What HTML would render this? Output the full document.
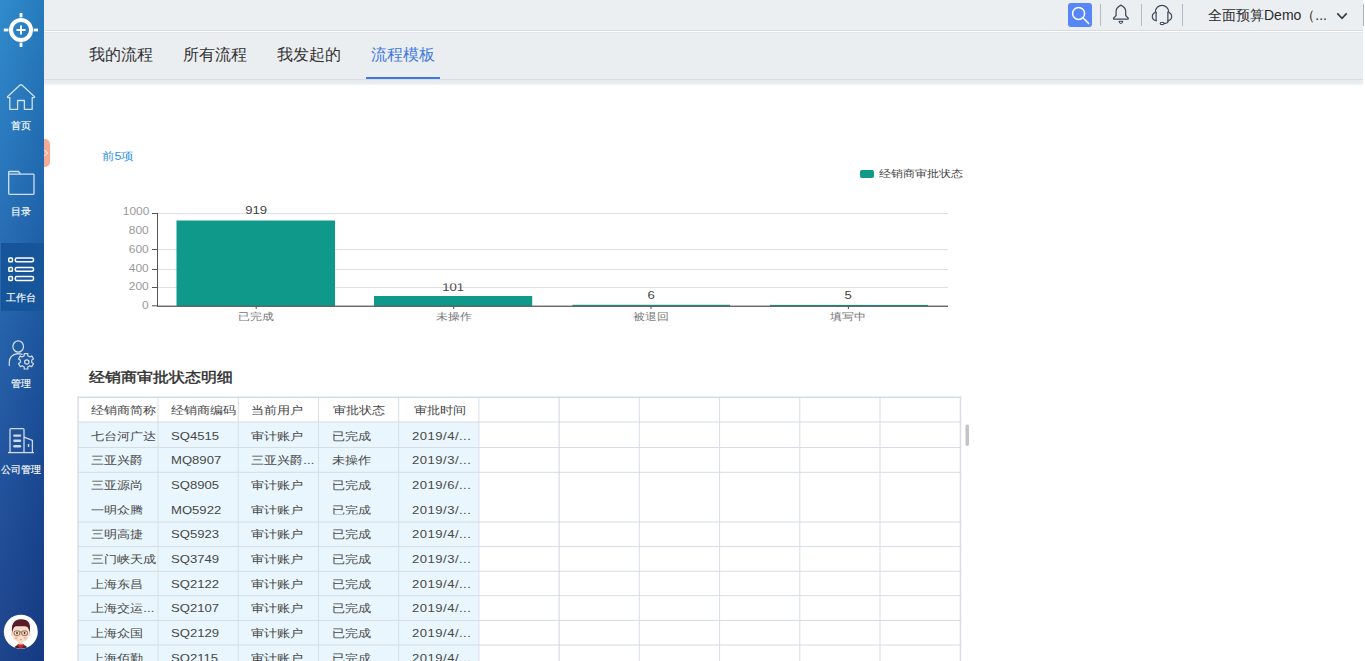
<!DOCTYPE html>
<html><head><meta charset="utf-8">
<style>
*{margin:0;padding:0;box-sizing:border-box}
html,body{width:1365px;height:661px;overflow:hidden;background:#fff;font-family:"Liberation Sans",sans-serif;color:#333}
.a{position:absolute;white-space:nowrap}
#side{position:absolute;left:0;top:0;width:44px;height:661px;background:linear-gradient(to right,rgba(255,255,255,.03),rgba(0,10,60,.1)),linear-gradient(180deg,#2a88cb 0%,#2473bb 25%,#1f5ea8 50%,#1b4c98 75%,#173f88 100%)}
.st{position:absolute;left:-1px;width:44px;text-align:center;font-size:10px;line-height:14px;color:#fff;-webkit-text-stroke:0.15px #fff}
#hdr{position:absolute;left:44px;top:0;width:1319px;height:31px;background:#eceff2;border-bottom:1px solid #d7dbe0}
#tabs{position:absolute;left:44px;top:32px;width:1319px;height:48px;background:#ebeef1;border-top:1px solid #e3e6e9;border-bottom:1px solid #d9dde3}
#shadow{position:absolute;left:44px;top:80px;width:1319px;height:6px;background:linear-gradient(#e8ebee 0%,#e9ecef 55%,rgba(255,255,255,0) 100%)}
.tab{position:absolute;top:45px;font-size:16px;line-height:20px;color:#333}
.sx{transform-origin:0 0}
.rl{position:absolute;background:#d6dce4}
.td{position:absolute;font-size:11px;line-height:14px;color:#474747;transform:scaleX(1.19);transform-origin:0 0;white-space:nowrap}
</style></head><body>
<div id="side">
  <!-- logo -->
  <svg class="a" style="left:0;top:0" width="44" height="60" viewBox="0 0 44 60">
    <circle cx="21" cy="30" r="10" fill="none" stroke="#fff" stroke-width="4"/>
    <rect x="19.6" y="13" width="2.8" height="4.3" fill="#fff"/>
    <rect x="19.6" y="42.6" width="2.8" height="4.4" fill="#fff"/>
    <rect x="3.8" y="28.6" width="4.6" height="2.8" fill="#fff"/>
    <rect x="33.6" y="28.6" width="4.4" height="2.8" fill="#fff"/>
    <path d="M16.5 30H25.5M21 25.5V34.5" stroke="#fff" stroke-width="1.9"/>
  </svg>
  <!-- home -->
  <svg class="a" style="left:0;top:75px" width="44" height="40" viewBox="0 75 44 40">
    <path d="M9.8 109.3V97.6H7.9Q7.1 97.3 7.7 96.5L20.1 85.1Q21 84.3 21.9 85.1L34.3 96.5Q34.9 97.3 34.1 97.6H32.2V109.3H24.4V100.5H17.6V109.3Z" fill="none" stroke="rgba(255,255,255,.78)" stroke-width="1.3" stroke-linejoin="round"/>
  </svg>
  <div class="st" style="top:119px">首页</div>
  <!-- folder -->
  <svg class="a" style="left:0;top:160px" width="44" height="40" viewBox="0 160 44 40">
    <path d="M8.7 193.6V172.3Q8.7 171.5 9.5 171.5H18.5L20.6 174.2H33.3Q34 174.2 34 175V193.6Q34 194.3 33.3 194.3H9.4Q8.7 194.3 8.7 193.6ZM8.7 174.2H20.6" fill="none" stroke="rgba(255,255,255,.78)" stroke-width="1.3" stroke-linejoin="round"/>
  </svg>
  <div class="st" style="top:205px">目录</div>
  <!-- active -->
  <div class="a" style="left:1px;top:243px;width:43px;height:68px;background:#17559a"></div>
  <svg class="a" style="left:0;top:250px" width="44" height="40" viewBox="0 250 44 40">
    <g fill="none" stroke="#fff" stroke-width="1.5">
      <rect x="8.8" y="257.9" width="3.6" height="3.8" rx="0.8"/>
      <rect x="15.3" y="257.9" width="18.2" height="3.8" rx="1.5"/>
      <rect x="8.8" y="267.4" width="3.6" height="3.8" rx="0.8"/>
      <rect x="15.3" y="267.4" width="18.2" height="3.8" rx="1.5"/>
      <rect x="8.8" y="276.6" width="3.6" height="3.8" rx="0.8"/>
      <rect x="15.3" y="276.6" width="18.2" height="3.8" rx="1.5"/>
    </g>
  </svg>
  <div class="st" style="top:291px">工作台</div>
  <!-- manage -->
  <svg class="a" style="left:0;top:335px" width="44" height="40" viewBox="0 335 44 40">
    <g fill="none" stroke="rgba(255,255,255,.8)" stroke-width="1.2">
      <ellipse cx="18.2" cy="346.5" rx="5.3" ry="5.7"/>
      <path d="M9.3 366V362Q9.5 355 17.5 353.6Q20.5 353.6 22.6 354.5"/>
      <path d="M24.2 353.6 L27.8 353.6 L27.8 355.7 L29.9 356.9 L31.7 355.9 L33.5 359 L31.7 360 L31.7 362.6 L33.5 363.6 L31.7 366.7 L29.9 365.7 L27.8 366.9 L27.8 369 L24.2 369 L24.2 366.9 L22.1 365.7 L20.3 366.7 L18.5 363.6 L20.3 362.6 L20.3 360 L18.5 359 L20.3 355.9 L22.1 356.9 L24.2 355.7Z" stroke-linejoin="round"/>
      <circle cx="26.8" cy="362" r="2.2"/>
    </g>
  </svg>
  <div class="st" style="top:377px">管理</div>
  <!-- company -->
  <svg class="a" style="left:0;top:420px" width="44" height="40" viewBox="0 420 44 40">
    <g fill="none" stroke="rgba(255,255,255,.78)" stroke-width="1.3" stroke-linejoin="round">
      <path d="M10 452.3V429.6Q10 428.6 11 428.6H23Q24 428.6 24 429.6V452.3"/>
      <path d="M24 437.2L32.4 440.4V452.3"/>
      <path d="M8 452.6H34"/>
    </g>
    <g fill="rgba(255,255,255,.78)">
      <rect x="13.2" y="434.4" width="8" height="2.4" rx="1.2"/>
      <rect x="13.2" y="439.5" width="8" height="2.4" rx="1.2"/>
      <rect x="13.2" y="445" width="8" height="2.4" rx="1.2"/>
      <rect x="27.8" y="444" width="1.5" height="3" rx=".6"/>
    </g>
  </svg>
  <div class="st" style="top:463px;left:-2px;width:46px">公司管理</div>
  <!-- avatar -->
  <svg class="a" style="left:0;top:610px" width="44" height="44" viewBox="0 610 44 44">
    <circle cx="20.8" cy="631.7" r="17" fill="#fff"/>
    <clipPath id="av"><circle cx="20.8" cy="631.7" r="16.9"/></clipPath>
    <g clip-path="url(#av)">
      <path d="M12.5 652Q13 645.5 20.8 644Q28.5 645.5 29.2 652Z" fill="#4e2434"/>
      <path d="M17.3 644.6L20.8 649.5L24.3 644.6L22.5 643.8L20.8 645.5L19 643.8Z" fill="#d4222c"/>
      <rect x="18.8" y="640" width="4" height="4.5" fill="#f3d2b8"/>
      <ellipse cx="12.3" cy="634" rx="1.3" ry="2" fill="#f3d2b8"/>
      <ellipse cx="29.3" cy="634" rx="1.3" ry="2" fill="#f3d2b8"/>
      <path d="M12.8 630Q12.8 626 20.8 625.5Q28.8 626 28.8 630V636Q28.5 640.5 20.8 643Q13.1 640.5 12.8 636Z" fill="#f9dec6"/>
      <path d="M12 633Q11 624 15 621Q18 618.8 21 619.3Q26 619 28.5 622Q30.8 625 29.7 633L28.6 629Q28 626.5 25 626.3Q20.5 626 16 626.3Q13.6 626.8 13.2 629Z" fill="#5a1c29"/>
      <g fill="none" stroke="#7a5a48" stroke-width=".9"><rect x="14.2" y="631" width="5.6" height="4.3" rx="1.3"/><rect x="21.8" y="631" width="5.6" height="4.3" rx="1.3"/><path d="M19.8 632H21.8"/></g>
      <circle cx="17" cy="633" r=".9" fill="#3a2626"/><circle cx="24.6" cy="633" r=".9" fill="#3a2626"/>
      <circle cx="16.3" cy="638" r="1.4" fill="#f7b4b0"/><circle cx="25.3" cy="638" r="1.4" fill="#f7b4b0"/>
      <path d="M19.8 639.6H21.8" stroke="#c4806c" stroke-width=".7"/>
    </g>
  </svg>
</div>
<!-- orange collapse tab -->
<div class="a" style="left:44px;top:138.5px;width:6px;height:28.5px;background:#f4ab93;border-radius:0 5px 5px 0"></div>
<svg class="a" style="left:44px;top:148px" width="6" height="10" viewBox="0 0 6 10"><path d="M0.5 2L3.5 5L0.5 8" fill="none" stroke="#fff" stroke-width="1"/></svg>

<!-- header -->
<div id="hdr"></div>
<div id="tabs"></div>
<div id="shadow"></div>
<div class="tab" style="left:89px">我的流程</div>
<div class="tab" style="left:183px">所有流程</div>
<div class="tab" style="left:277px">我发起的</div>
<div class="tab" style="left:371px;color:#4279e0">流程模板</div>
<div class="a" style="left:366px;top:77px;width:74px;height:2px;background:#3f78e0"></div>

<!-- header right -->
<div class="a" style="left:1068px;top:3px;width:24px;height:24px;background:#5686f7;border-radius:3px"></div>
<svg class="a" style="left:1068px;top:3px" width="24" height="24" viewBox="0 0 24 24">
  <circle cx="10.6" cy="10.4" r="6" fill="none" stroke="#fff" stroke-width="1.5"/>
  <path d="M15.2 15L20.6 20.4" stroke="#fff" stroke-width="1.5" stroke-linecap="round"/>
</svg>
<div class="a" style="left:1100px;top:4px;width:1px;height:22px;background:#b4bac2"></div>
<div class="a" style="left:1141px;top:4px;width:1px;height:22px;background:#b4bac2"></div>
<div class="a" style="left:1182px;top:4px;width:1px;height:22px;background:#b4bac2"></div>
<svg class="a" style="left:1110px;top:0" width="24" height="28" viewBox="0 0 24 28">
  <path d="M10.9 5.1C8.4 6.4 6.1 8.2 6.1 11.2V15.5L3.6 18.1Q3.2 19.1 4.3 19.1H17.5Q18.6 19.1 18.2 18.1L15.7 15.5V11.2C15.7 8.2 13.4 6.4 10.9 5.1Z" fill="none" stroke="#3f4b5a" stroke-width="1.25" stroke-linejoin="round"/>
  <path d="M9.1 21.2H12.7Q12.5 23.5 10.9 23.5Q9.3 23.5 9.1 21.2Z" fill="none" stroke="#3f4b5a" stroke-width="1.1" stroke-linejoin="round"/>
</svg>
<svg class="a" style="left:1150px;top:0" width="24" height="28" viewBox="0 0 24 28">
  <path d="M5.2 12.6C5.2 3.1 18.8 3.1 18.8 12.6" fill="none" stroke="#3f4b5a" stroke-width="1.25"/>
  <path d="M6.4 12.2Q2.3 13.2 2.3 16.5Q2.3 19.9 6.4 20.8Z" fill="none" stroke="#3f4b5a" stroke-width="1.2" stroke-linejoin="round"/>
  <path d="M17.6 12.2Q21.7 13.2 21.7 16.5Q21.7 19.9 17.6 20.8Z" fill="none" stroke="#3f4b5a" stroke-width="1.2" stroke-linejoin="round"/>
  <rect x="5.4" y="12.4" width="1.5" height="8.2" fill="#6f7c8a"/><rect x="17.1" y="12.4" width="1.5" height="8.2" fill="#6f7c8a"/>
  <path d="M18.3 20.6Q18.2 23.3 15.4 23.4H13.6" fill="none" stroke="#3f4b5a" stroke-width="1.2"/>
  <ellipse cx="12.1" cy="23.4" rx="2" ry="1.2" fill="none" stroke="#3f4b5a" stroke-width="1.1"/>
</svg>
<div class="a" style="left:1208px;top:5px;font-size:14px;line-height:20px;color:#2b2b2b">全面预算Demo（...</div>
<svg class="a" style="left:1335px;top:10px" width="14" height="12" viewBox="0 0 14 12"><path d="M2.3 3.4L7 8.4L11.7 3.4" fill="none" stroke="#2f3b4a" stroke-width="1.6"/></svg>
<div class="a" style="left:1363px;top:4px;width:1px;height:22px;background:#aab0b8"></div>

<!-- REPORT -->
<!--REPORT-->
<div class="a" style="left:101.5px;top:149px;font-size:11px;line-height:14px;color:#2f95e6;transform:scaleX(1.13);transform-origin:0 0">前5项</div>
<div class="a" style="left:859.5px;top:170px;width:14.5px;height:8px;background:#0e998b;border-radius:2px"></div>
<div class="a" style="left:879px;top:167px;font-size:10px;line-height:14px;color:#444;transform:scaleX(1.2);transform-origin:0 0">经销商审批状态</div>
<svg class="a" style="left:0;top:0" width="1365" height="661" viewBox="0 0 1365 661">
<rect x="158" y="213.0" width="790" height="1" fill="#e0e0e0"/>
<rect x="158" y="249.0" width="790" height="1" fill="#e0e0e0"/>
<rect x="158" y="269.0" width="790" height="1" fill="#e0e0e0"/>
<rect x="158" y="287.0" width="790" height="1" fill="#e0e0e0"/>
<rect x="176.5" y="220.5" width="158.5" height="85.69999999999999" fill="#0e998b"/>
<rect x="374" y="296" width="158.20000000000005" height="10.199999999999989" fill="#0e998b"/>
<rect x="572.5" y="304.8" width="157.5" height="1.3999999999999773" fill="#0e998b"/>
<rect x="770" y="304.9" width="158" height="1.3000000000000114" fill="#0e998b"/>
<rect x="157" y="213" width="1" height="93" fill="#555"/>
<rect x="157" y="305.6" width="791" height="1.3" fill="#5a5a5a"/>
<rect x="152" y="213.0" width="5" height="1" fill="#555"/>
<rect x="152" y="249.0" width="5" height="1" fill="#555"/>
<rect x="152" y="269.0" width="5" height="1" fill="#555"/>
<rect x="152" y="287.0" width="5" height="1" fill="#555"/>
<rect x="152" y="305.3" width="5" height="1" fill="#555"/>
<rect x="255.7" y="306" width="1" height="3" fill="#555"/>
<rect x="453.1" y="306" width="1" height="3" fill="#555"/>
<rect x="650.5" y="306" width="1" height="3" fill="#555"/>
<rect x="847.9" y="306" width="1" height="3" fill="#555"/>
</svg>
<div class="a" style="left:60px;width:89px;text-align:right;top:204.7px;font-size:10px;line-height:14px;color:#999"><span style="display:inline-block;transform:scaleX(1.19);transform-origin:100% 0">1000</span></div>
<div class="a" style="left:60px;width:89px;text-align:right;top:223.5px;font-size:10px;line-height:14px;color:#999"><span style="display:inline-block;transform:scaleX(1.19);transform-origin:100% 0">800</span></div>
<div class="a" style="left:60px;width:89px;text-align:right;top:242.5px;font-size:10px;line-height:14px;color:#999"><span style="display:inline-block;transform:scaleX(1.19);transform-origin:100% 0">600</span></div>
<div class="a" style="left:60px;width:89px;text-align:right;top:262px;font-size:10px;line-height:14px;color:#999"><span style="display:inline-block;transform:scaleX(1.19);transform-origin:100% 0">400</span></div>
<div class="a" style="left:60px;width:89px;text-align:right;top:280px;font-size:10px;line-height:14px;color:#999"><span style="display:inline-block;transform:scaleX(1.19);transform-origin:100% 0">200</span></div>
<div class="a" style="left:60px;width:89px;text-align:right;top:298.5px;font-size:10px;line-height:14px;color:#999"><span style="display:inline-block;transform:scaleX(1.19);transform-origin:100% 0">0</span></div>
<div class="a" style="left:206px;width:100px;text-align:center;top:202.8px;font-size:11px;line-height:14px;color:#444"><span style="display:inline-block;transform:scaleX(1.19)">919</span></div>
<div class="a" style="clip-path:inset(4px 0 0 0);left:403px;width:100px;text-align:center;top:279.5px;font-size:11px;line-height:14px;color:#444"><span style="display:inline-block;transform:scaleX(1.19)">101</span></div>
<div class="a" style="left:601px;width:100px;text-align:center;top:287.6px;font-size:11px;line-height:14px;color:#444"><span style="display:inline-block;transform:scaleX(1.19)">6</span></div>
<div class="a" style="left:798.4px;width:100px;text-align:center;top:287.6px;font-size:11px;line-height:14px;color:#444"><span style="display:inline-block;transform:scaleX(1.19)">5</span></div>
<div class="a" style="left:206.2px;width:100px;text-align:center;top:310px;font-size:10px;line-height:14px;color:#777"><span style="display:inline-block;transform:scaleX(1.19)">已完成</span></div>
<div class="a" style="left:403.6px;width:100px;text-align:center;top:310px;font-size:10px;line-height:14px;color:#777"><span style="display:inline-block;transform:scaleX(1.19)">未操作</span></div>
<div class="a" style="left:601px;width:100px;text-align:center;top:310px;font-size:10px;line-height:14px;color:#777"><span style="display:inline-block;transform:scaleX(1.19)">被退回</span></div>
<div class="a" style="left:798.4px;width:100px;text-align:center;top:310px;font-size:10px;line-height:14px;color:#777"><span style="display:inline-block;transform:scaleX(1.19)">填写中</span></div>
<div class="a" style="left:89px;top:368px;font-size:14px;line-height:18px;color:#2e2e2e;-webkit-text-stroke:0.4px #2e2e2e;transform:scaleX(1.14);transform-origin:0 0">经销商审批状态明细</div>
<svg class="a" style="left:0;top:0" width="1365" height="661" viewBox="0 0 1365 661">
<rect x="77.8" y="422" width="401.1" height="300" fill="#eaf6fd"/>
<rect x="77.8" y="396.5" width="883.42" height="1.5" fill="#d6dce4"/>
<rect x="77.8" y="421.5" width="883.42" height="1" fill="#d6dce4"/>
<rect x="77.8" y="447.0" width="883.42" height="1" fill="#d6dce4"/>
<rect x="77.8" y="471.8" width="883.42" height="1" fill="#d6dce4"/>
<rect x="77.8" y="521.5" width="883.42" height="1" fill="#d6dce4"/>
<rect x="77.8" y="546.1" width="883.42" height="1" fill="#d6dce4"/>
<rect x="77.8" y="570.8" width="883.42" height="1" fill="#d6dce4"/>
<rect x="77.8" y="595.2" width="883.42" height="1" fill="#d6dce4"/>
<rect x="77.8" y="619.9" width="883.42" height="1" fill="#d6dce4"/>
<rect x="77.8" y="644.5" width="883.42" height="1" fill="#d6dce4"/>
<rect x="77.8" y="669.2" width="883.42" height="1" fill="#d6dce4"/>
<rect x="77.3" y="396.5" width="1.5" height="270" fill="#d9dee6"/>
<rect x="157.51999999999998" y="396.5" width="1" height="270" fill="#d9dee6"/>
<rect x="237.74" y="396.5" width="1" height="270" fill="#d9dee6"/>
<rect x="317.96" y="396.5" width="1" height="270" fill="#d9dee6"/>
<rect x="398.18" y="396.5" width="1" height="270" fill="#d9dee6"/>
<rect x="478.40000000000003" y="396.5" width="1" height="270" fill="#d9dee6"/>
<rect x="558.62" y="396.5" width="1" height="270" fill="#d0d6de"/>
<rect x="638.8399999999999" y="396.5" width="1" height="270" fill="#d9dee6"/>
<rect x="719.06" y="396.5" width="1" height="270" fill="#d9dee6"/>
<rect x="799.28" y="396.5" width="1" height="270" fill="#d9dee6"/>
<rect x="879.5" y="396.5" width="1" height="270" fill="#d9dee6"/>
<rect x="959.7199999999999" y="396.5" width="1.5" height="270" fill="#d9dee6"/>
<rect x="965.5" y="424.5" width="3.5" height="21.5" rx="1.7" fill="#c4c4c4"/>
</svg>
<div class="td" style="left:91px;top:403px">经销商简称</div>
<div class="td" style="left:171px;top:403px">经销商编码</div>
<div class="td" style="left:250.5px;top:403px">当前用户</div>
<div class="td" style="left:333px;top:403px">审批状态</div>
<div class="td" style="left:413.6px;top:403px">审批时间</div>
<div class="td" style="left:91px;top:428.5px;">七台河广达</div>
<div class="td" style="left:170.6px;top:428.5px;">SQ4515</div>
<div class="td" style="left:250.6px;top:428.5px;">审计账户</div>
<div class="td" style="left:332px;top:428.5px;">已完成</div>
<div class="td" style="left:411.7px;top:428.5px;letter-spacing:0.4px;">2019/4/...</div>
<div class="td" style="left:91px;top:453.2px;">三亚兴爵</div>
<div class="td" style="left:170.6px;top:453.2px;">MQ8907</div>
<div class="td" style="left:250.6px;top:453.2px;">三亚兴爵...</div>
<div class="td" style="left:332px;top:453.2px;">未操作</div>
<div class="td" style="left:411.7px;top:453.2px;letter-spacing:0.4px;">2019/3/...</div>
<div class="td" style="left:91px;top:477.9px;">三亚源尚</div>
<div class="td" style="left:170.6px;top:477.9px;">SQ8905</div>
<div class="td" style="left:250.6px;top:477.9px;">审计账户</div>
<div class="td" style="left:332px;top:477.9px;">已完成</div>
<div class="td" style="left:411.7px;top:477.9px;letter-spacing:0.4px;">2019/6/...</div>
<div class="td" style="left:91px;top:502.6px;clip-path:inset(2.5px 0 2px 0);">一明众腾</div>
<div class="td" style="left:170.6px;top:502.6px;clip-path:inset(2.5px 0 2px 0);">MQ5922</div>
<div class="td" style="left:250.6px;top:502.6px;clip-path:inset(2.5px 0 2px 0);">审计账户</div>
<div class="td" style="left:332px;top:502.6px;clip-path:inset(2.5px 0 2px 0);">已完成</div>
<div class="td" style="left:411.7px;top:502.6px;letter-spacing:0.4px;clip-path:inset(2.5px 0 2px 0);">2019/3/...</div>
<div class="td" style="left:91px;top:527.3px;">三明高捷</div>
<div class="td" style="left:170.6px;top:527.3px;">SQ5923</div>
<div class="td" style="left:250.6px;top:527.3px;">审计账户</div>
<div class="td" style="left:332px;top:527.3px;">已完成</div>
<div class="td" style="left:411.7px;top:527.3px;letter-spacing:0.4px;">2019/4/...</div>
<div class="td" style="left:91px;top:552.0px;">三门峡天成</div>
<div class="td" style="left:170.6px;top:552.0px;">SQ3749</div>
<div class="td" style="left:250.6px;top:552.0px;">审计账户</div>
<div class="td" style="left:332px;top:552.0px;">已完成</div>
<div class="td" style="left:411.7px;top:552.0px;letter-spacing:0.4px;">2019/3/...</div>
<div class="td" style="left:91px;top:576.7px;">上海东昌</div>
<div class="td" style="left:170.6px;top:576.7px;">SQ2122</div>
<div class="td" style="left:250.6px;top:576.7px;">审计账户</div>
<div class="td" style="left:332px;top:576.7px;">已完成</div>
<div class="td" style="left:411.7px;top:576.7px;letter-spacing:0.4px;">2019/4/...</div>
<div class="td" style="left:91px;top:601.4px;">上海交运...</div>
<div class="td" style="left:170.6px;top:601.4px;">SQ2107</div>
<div class="td" style="left:250.6px;top:601.4px;">审计账户</div>
<div class="td" style="left:332px;top:601.4px;">已完成</div>
<div class="td" style="left:411.7px;top:601.4px;letter-spacing:0.4px;">2019/4/...</div>
<div class="td" style="left:91px;top:626.1px;">上海众国</div>
<div class="td" style="left:170.6px;top:626.1px;">SQ2129</div>
<div class="td" style="left:250.6px;top:626.1px;">审计账户</div>
<div class="td" style="left:332px;top:626.1px;">已完成</div>
<div class="td" style="left:411.7px;top:626.1px;letter-spacing:0.4px;">2019/4/...</div>
<div class="td" style="left:91px;top:650.8px;">上海佰勤</div>
<div class="td" style="left:170.6px;top:650.8px;">SQ2115</div>
<div class="td" style="left:250.6px;top:650.8px;">审计账户</div>
<div class="td" style="left:332px;top:650.8px;">已完成</div>
<div class="td" style="left:411.7px;top:650.8px;letter-spacing:0.4px;">2019/4/...</div>
<!--/REPORT-->
</body></html>
